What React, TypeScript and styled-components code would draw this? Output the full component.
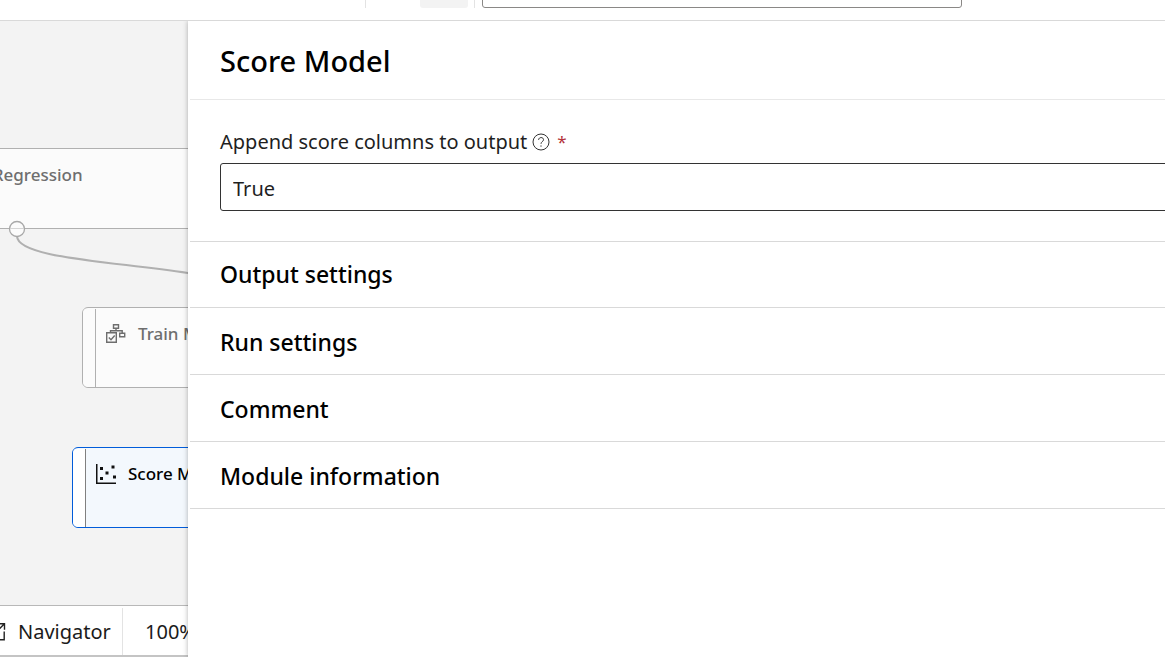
import React from "react";
import styled, { createGlobalStyle } from "styled-components";

const GlobalStyle = createGlobalStyle`
  *, *::before, *::after { box-sizing: border-box; }
  body {
    margin: 0;
    overflow: hidden;
    background: #fff;
    color: #000;
    font-family: "Segoe UI", "Noto Sans", "Open Sans", sans-serif;
  }
  button, input, select { font: inherit; color: inherit; }
  h1, h2 { margin: 0; }
`;

const Page = styled.div`
  display: flex;
  flex-direction: column;
  height: 100vh;
`;

const TopBar = styled.header`
  display: flex;
  align-items: flex-end;
  flex: none;
  height: 21px;
  padding: 0 203px 12px 365px;
  border-bottom: 1px solid #d9d9d9;
  overflow: hidden;
`;

const Separator = styled.span`
  width: 1px;
  height: 32px;
  background: #e3e3e3;
`;

const ToolButton = styled.button`
  width: 48px;
  height: 32px;
  margin: 0 6px 0 54px;
  border: 0;
  border-radius: 3px;
  background: #f3f3f3;
`;

const SearchBox = styled.input`
  flex: 1;
  min-width: 0;
  height: 32px;
  margin-left: 7px;
  padding: 0 12px;
  border: 1px solid #8a8886;
  border-radius: 3px;
  background: #fff;
  outline: 0;
`;

const Workspace = styled.div`
  display: grid;
  grid-template-columns: 188px minmax(0, 1fr);
  flex: 1;
  min-height: 0;
`;

const Designer = styled.div`
  display: flex;
  flex-direction: column;
  min-height: 0;
  overflow: hidden;
`;

const Canvas = styled.div`
  position: relative;
  flex: 1;
  overflow: hidden;
  background: #f3f3f3;
`;

const Node = styled.div<{ $x: number; $y: number; $selected?: boolean }>`
  position: absolute;
  left: ${(p) => p.$x}px;
  top: ${(p) => p.$y}px;
  display: flex;
  width: 380px;
  height: 81px;
  border: 1px solid ${(p) => (p.$selected ? "#015cda" : "#b0b0b0")};
  border-radius: 6px;
  background: ${(p) => (p.$selected ? "#f3f8fd" : "#fbfbfb")};
  color: ${(p) => (p.$selected ? "#000" : "#6e6e6e")};
  overflow: hidden;
`;

const NodeHandle = styled.span<{ $selected?: boolean }>`
  flex: none;
  width: 13px;
  margin-top: 1px;
  border-right: 1px solid ${(p) => (p.$selected ? "#808080" : "#b0b0b0")};
  background: ${(p) => (p.$selected ? "#fff" : "#fbfbfb")};
`;

const NodeTitle = styled.span`
  display: flex;
  align-items: center;
  gap: 11px;
  height: 24px;
  margin: 14px 0 0 9px;
  font-size: 17px;
  line-height: 24px;
  font-weight: 500;
  white-space: nowrap;
`;

const Wires = styled.svg`
  position: absolute;
  left: 0;
  top: 0;
  width: 100%;
  height: 100%;
`;

const StatusBar = styled.footer`
  display: flex;
  flex: none;
  height: 52px;
  border-top: 1px solid #b8b8b8;
  border-bottom: 2px solid #c4c4c4;
  background: #fff;
  color: #1b1b1b;
  font-size: 20px;
  overflow: hidden;
`;

const StatusButton = styled.button`
  display: flex;
  align-items: center;
  flex: none;
  gap: 12px;
  width: 137px;
  margin: 2px 0 0 -14px;
  padding: 0;
  border: 0;
  border-right: 1px solid #e3e3e3;
  background: none;
`;

const Zoom = styled.span`
  display: flex;
  align-items: center;
  padding: 2px 0 0 22px;
`;

const Panel = styled.aside`
  position: relative;
  padding-left: 2px;
  background: #fff;
  box-shadow: 0 0 5px rgba(0, 0, 0, 0.3);
  clip-path: inset(0 0 0 -12px);
  overflow: visible;
`;

const PanelHeader = styled.div`
  padding: 20px 30px 18px;
  border-bottom: 1px solid #e8e8e8;
`;

const PanelTitle = styled.h1`
  font-size: 29px;
  line-height: 40px;
  font-weight: 500;
`;

const Field = styled.div`
  padding: 28px 0 30px 30px;
  margin-right: -32px;
`;

const LabelRow = styled.div`
  display: flex;
  align-items: center;
  gap: 5px;
  margin-bottom: 7px;
  font-size: 20px;
  line-height: 28px;
  color: #1f1f1f;
`;

const Required = styled.span`
  padding-left: 2px;
  font-size: 17px;
  color: #b3343a;
`;

const Select = styled.select`
  display: block;
  appearance: none;
  width: 100%;
  height: 48px;
  padding: 2px 12px 0;
  border: 1px solid #333;
  border-radius: 3px;
  background: #fff;
  color: #1f1f1f;
  font-size: 20px;
`;

const SectionButton = styled.button`
  display: block;
  width: 100%;
  padding: 18px 30px 16px;
  border: 0;
  background: none;
  text-align: left;
  font-size: 23px;
  line-height: 32px;
  font-weight: 500;
`;

const Section = styled.h2`
  border-top: 1px solid #d9d9d9;
  &:first-child ${SectionButton} { padding: 16px 30px 17px; }
  &:last-child { border-bottom: 1px solid #d9d9d9; }
`;

const sections = ["Output settings", "Run settings", "Comment", "Module information"];

const TrainIcon = () => (
  <svg width="22" height="22" viewBox="0 0 22 22" fill="none" stroke="#6e6e6e" strokeWidth="1.4">
    <path d="M8.5 1.7h5v3.6h-5zM14.7 10.2h5v3.6h-5zM1.7 9.7h9.6v9.6H1.7zM11 5.3v2.4M5.5 9.700V7.7h11.7v2.500" />
    <path d="M3.8 14.5l2.2 2.2 3.700-4.200" />
  </svg>
);

const ScoreIcon = () => (
  <svg width="22" height="22" viewBox="0 0 22 22" fill="#111">
    <path d="M1 1h1.500v18.500H21V21H1zM5 4h3v3H5zM10.500 8.500h3v3h-3zM16.500 2.500h3v3h-3zM5 14h3v3H5zM18 12.500h3v3h-3z" />
  </svg>
);

const OpenIcon = () => (
  <svg width="20" height="20" viewBox="0 0 20 20" fill="none" stroke="#222" strokeWidth="1.4">
    <path d="M9 3.500H2.500V17.800H18.200V9.500M12 1.800h6.500v6M18.200 2L8 12.500" />
  </svg>
);

const HelpIcon = () => (
  <svg width="18" height="18" viewBox="0 0 18 18" fill="none" stroke="#333">
    <circle cx="9" cy="9" r="8" />
    <path d="M6.600 6.900c0-3.100 4.900-3.100 4.900-.2 0 1.900-2.500 2-2.500 4.100M9 12.400v1.300" />
  </svg>
);

export default function App() {
  return (
    <Page>
      <GlobalStyle />
      <TopBar>
        <Separator />
        <ToolButton aria-label="Tool" />
        <Separator />
        <SearchBox aria-label="Search" />
      </TopBar>
      <Workspace>
        <Designer>
          <Canvas>
            <Node $x={-175} $y={127}>
              <NodeHandle />
              <NodeTitle>Boosted Decision Regression</NodeTitle>
            </Node>
            <Node $x={82} $y={286}>
              <NodeHandle />
              <NodeTitle>
                <TrainIcon />
                Train Model
              </NodeTitle>
            </Node>
            <Node $x={72} $y={426} $selected>
              <NodeHandle $selected />
              <NodeTitle>
                <ScoreIcon />
                Score Model
              </NodeTitle>
            </Node>
            <Wires aria-hidden="true">
              <path d="M17 215C17 237 110 240 194 253" fill="none" stroke="#b0b0b0" strokeWidth="2" />
              <circle cx="17" cy="208" r="7.500" fill="#fbfbfb" stroke="#a8a8a8" strokeWidth="1.300" />
              <path d="M10 207.500h14" stroke="#d4d4d4" />
            </Wires>
          </Canvas>
          <StatusBar>
            <StatusButton>
              <OpenIcon />
              Navigator
            </StatusButton>
            <Zoom>100%</Zoom>
          </StatusBar>
        </Designer>
        <Panel>
          <PanelHeader>
            <PanelTitle>Score Model</PanelTitle>
          </PanelHeader>
          <Field>
            <LabelRow>
              <label htmlFor="append">Append score columns to output</label>
              <HelpIcon />
              <Required>*</Required>
            </LabelRow>
            <Select id="append" defaultValue="True">
              <option>True</option>
              <option>False</option>
            </Select>
          </Field>
          <div>
            {sections.map((name) => (
              <Section key={name}>
                <SectionButton>{name}</SectionButton>
              </Section>
            ))}
          </div>
        </Panel>
      </Workspace>
    </Page>
  );
}
